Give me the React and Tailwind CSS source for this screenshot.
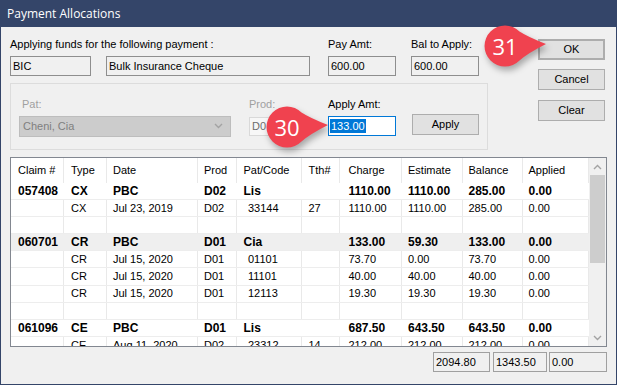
import React from 'react';
import clsx from 'clsx';

// column widths + left padding of the allocation grid
const cols = [
  'w-[53px] pl-[7px]',
  'w-[42.5px] pl-[7px]',
  'w-[91px] pl-[6.5px]',
  'w-[39px] pl-[6.5px]',
  'w-[65px] pl-[7px]',
  'w-[38.5px] pl-[7px]',
  'w-[61.5px] pl-[8.5px]',
  'w-[61px] pl-[6.5px]',
  'w-[60.5px] pl-[6px]',
  'w-[65.5px] pl-[5.5px]',
];

const code = (c) => <span className="ml-[4.5px]">{c}</span>;

const rows = [
  { kind: 'bold', cells: ['057408', 'CX', 'PBC', 'D02', 'Lis', '', '1110.00', '1110.00', '285.00', '0.00'] },
  { kind: 'detail', cells: ['', 'CX', 'Jul 23, 2019', 'D02', code('33144'), '27', '1110.00', '1110.00', '285.00', '0.00'] },
  { kind: 'blank' },
  { kind: 'bold', shade: true, cells: ['060701', 'CR', 'PBC', 'D01', 'Cia', '', '133.00', '59.30', '133.00', '0.00'] },
  { kind: 'detail', cells: ['', 'CR', 'Jul 15, 2020', 'D01', code('01101'), '', '73.70', '0.00', '73.70', '0.00'] },
  { kind: 'detail', cells: ['', 'CR', 'Jul 15, 2020', 'D01', code('11101'), '', '40.00', '40.00', '40.00', '0.00'] },
  { kind: 'detail', cells: ['', 'CR', 'Jul 15, 2020', 'D01', code('12113'), '', '19.30', '19.30', '19.30', '0.00'] },
  { kind: 'blank' },
  { kind: 'bold', cells: ['061096', 'CE', 'PBC', 'D01', 'Lis', '', '687.50', '643.50', '643.50', '0.00'] },
  { kind: 'detail', cells: ['', 'CE', 'Aug 11, 2020', 'D02', code('23312'), '14', '212.00', '212.00', '212.00', '0.00'] },
];

const header = ['Claim #', 'Type', 'Date', 'Prod', 'Pat/Code', 'Tth#', 'Charge', 'Estimate', 'Balance', 'Applied'];

function Row({ kind, cells, shade }) {
  const lined = kind !== 'bold';
  return (
    <div
      className={clsx(
        'flex shrink-0',
        kind === 'head' ? 'h-[24.5px]' : 'h-[17.2px] border-b border-[#ededed]',
        shade && 'bg-[#efefef]',
        kind === 'bold' ? 'text-[12px] font-bold' : 'text-[11px]'
      )}
    >
      {cols.map((c, i) => (
        <div
          key={i}
          className={clsx(c, 'shrink-0 flex items-center whitespace-nowrap overflow-hidden', lined && 'border-r border-[#e9e9e9]')}
        >
          {cells ? cells[i] : ''}
        </div>
      ))}
    </div>
  );
}

function Chevron({ up }) {
  return (
    <svg width="9" height="6" viewBox="0 0 9 6">
      <path d={up ? 'M1 5 L4.5 1.5 L8 5' : 'M1 1 L4.5 4.5 L8 1'} fill="none" stroke="#a3a3a3" strokeWidth="1.4" />
    </svg>
  );
}

// numbered red call-out with a pointer to the right
function Badge({ n, className }) {
  return (
    <div className={clsx('absolute w-[70px] h-[50px] pointer-events-none', className)}>
      <svg width="70" height="50" viewBox="0 0 70 50" className="absolute inset-0 drop-shadow-[2px_4px_3px_rgba(0,0,0,0.3)]">
        <path
          d="M65 22 Q47 15 38.5 9.5 A20.5 20.5 0 1 0 38.5 38.5 Q47 31 65 22 Z"
          fill="#f0424f"
        />
      </svg>
      <span className="absolute left-[3px] top-[3px] w-[42px] h-[42px] flex items-center justify-center text-white text-[22px] font-['Open_Sans',sans-serif]">
        {n}
      </span>
    </div>
  );
}

const Box = ({ className, children }) => (
  <div className={clsx('h-[20px] border border-[#8e8e8e] bg-[#f0f0f0] flex items-center pl-[2px] text-[11px]', className)}>
    {children}
  </div>
);

const Btn = ({ className, children }) => (
  <div className={clsx('h-[21px] flex items-center justify-center bg-[#e1e1e1] border border-[#adadad] text-[11px]', className)}>
    {children}
  </div>
);

export default function App() {
  return (
    <div className="relative w-[617px] h-[385px] flex flex-col bg-[#344569] px-[1px] pb-[1px] font-['Liberation_Sans',Arial,sans-serif] text-black overflow-hidden">
      <div className="h-[27px] shrink-0 flex items-center pl-[6px] text-white text-[12px] font-['Open_Sans',sans-serif]">
        Payment Allocations
      </div>

      <div className="flex-1 bg-[#f0f0f0] flex flex-col pl-[9px] pr-[9px]">
        <div className="flex">
          {/* left block */}
          <div className="w-[478px] flex flex-col">
            <div className="mt-[11px] h-[13px] flex items-center text-[11px]">
              <div className="w-[318px]">Applying funds for the following payment :</div>
              <div className="w-[83px]">Pay Amt:</div>
              <div>Bal to Apply:</div>
            </div>
            <div className="mt-[5px] flex">
              <Box className="w-[81px]">BIC</Box>
              <Box className="w-[204px] ml-[15px]">Bulk Insurance Cheque</Box>
              <Box className="w-[68px] ml-[18px]">600.00</Box>
              <Box className="w-[68px] ml-[15px]">600.00</Box>
            </div>

            {/* disabled patient group */}
            <div className="mt-[7px] h-[67px] border border-[#dcdcdc] flex pl-[8px] pt-[14px]">
              <div className="w-[212px] flex flex-col">
                <div className="h-[13px] leading-[13px] pl-[3px] text-[11px] text-[#a0a0a0]">Pat:</div>
                <div className="mt-[5px] h-[20.5px] bg-[#cccccc] border border-[#bdbdbd] flex items-center justify-between pl-[3px] pr-[7px] text-[11px] text-[#7f7f7f]">
                  <span>Cheni, Cia</span>
                  <Chevron />
                </div>
              </div>
              <div className="w-[51px] ml-[18px] flex flex-col">
                <div className="h-[13px] leading-[13px] text-[11px] text-[#a0a0a0]">Prod:</div>
                <div className="mt-[6px] h-[19px] bg-[#f7f7f7] border border-[#d9d9d9] flex items-center pl-[2px] text-[11px] text-[#6d6d6d]">
                  D0
                </div>
              </div>
              <div className="w-[68px] ml-[28px] flex flex-col">
                <div className="h-[13px] leading-[13px] text-[11px]">Apply Amt:</div>
                <div className="mt-[5px] h-[20px] bg-white border border-[#0078d7] flex items-center pl-[1px] text-[11px]">
                  <span className="bg-[#0078d7] text-white leading-[14px] px-[1px]">133.00</span>
                </div>
              </div>
              <div className="w-[67px] ml-[16px] pt-[16px]">
                <Btn>Apply</Btn>
              </div>
            </div>
          </div>

          {/* dialog buttons */}
          <div className="ml-[50px] w-[67px] flex flex-col">
            <Btn className="mt-[12px] border-2 border-[#0078d7]">OK</Btn>
            <Btn className="mt-[9px]">Cancel</Btn>
            <Btn className="mt-[10px]">Clear</Btn>
          </div>
        </div>

        {/* allocation grid */}
        <div className="mt-[7px] w-[597px] h-[190px] border border-[#828790] bg-white flex overflow-hidden">
          <div className="w-[577.5px] flex flex-col overflow-hidden">
            <Row kind="head" cells={header} />
            {rows.map((r, i) => (
              <Row key={i} {...r} />
            ))}
          </div>
          <div className="w-[17.5px] bg-[#f0f0f0] flex flex-col">
            <div className="h-[17px] flex items-center justify-center">
              <Chevron up />
            </div>
            <div className="h-[88px] mx-[1px] bg-[#cdcdcd]" />
            <div className="flex-1" />
            <div className="h-[17px] flex items-center justify-center">
              <Chevron />
            </div>
          </div>
        </div>

        {/* totals */}
        <div className="mt-[5px] flex justify-end">
          <Box className="w-[57px] h-[19px] border-[#a0a0a0]">2094.80</Box>
          <Box className="w-[54px] h-[19px] ml-[3px] border-[#a0a0a0]">1343.50</Box>
          <Box className="w-[58px] h-[19px] ml-[2px] border-[#a0a0a0]">0.00</Box>
        </div>
      </div>

      <Badge n="30" className="left-[263px] top-[103px]" />
      <Badge n="31" className="left-[481px] top-[22px]" />
    </div>
  );
}
